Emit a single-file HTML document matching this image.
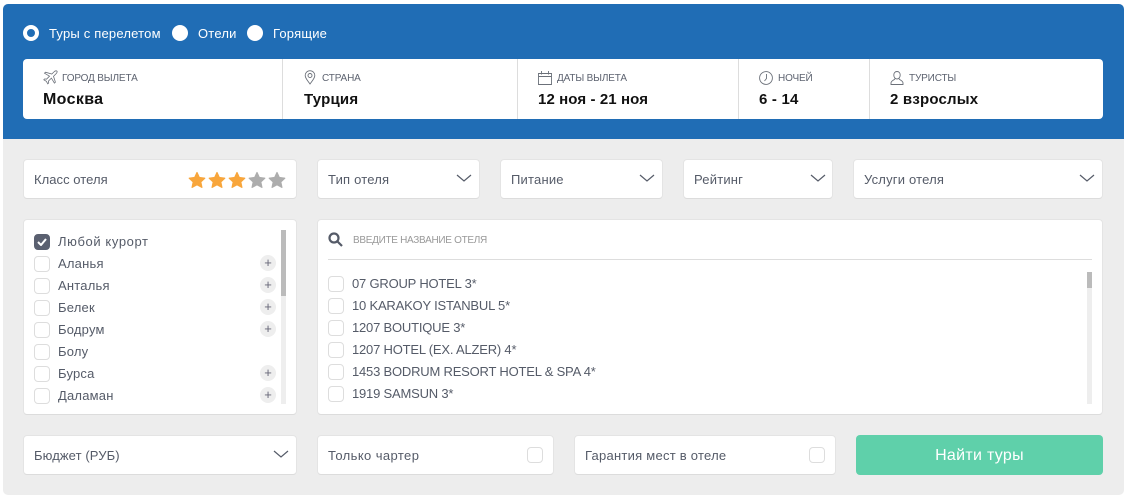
<!DOCTYPE html>
<html lang="ru"><head><meta charset="utf-8"><style>
html,body{margin:0;padding:0;background:#fff}
body{width:1127px;height:500px;position:relative;overflow:hidden;font-family:"Liberation Sans",sans-serif;color:#555b68}
div,span,svg{position:absolute;box-sizing:border-box}
.t{white-space:nowrap;line-height:20px;font-size:13px;letter-spacing:.2px}
.l{letter-spacing:-.2px}
.box{background:#fff;border:1px solid #e4e4e4;border-bottom-color:#dcdcdc;border-radius:4px}
.cb{width:16px;height:16px;background:#fff;border:1px solid #ddd;border-radius:4px}
.lab{white-space:nowrap;font-size:10px;line-height:14px;top:72px;color:#5d6370;letter-spacing:-.15px}
.val{white-space:nowrap;font-size:15px;font-weight:bold;line-height:20px;top:90px;color:#111;letter-spacing:.2px}
.div{top:59px;width:1px;height:60px;background:#ddd}
.plus{left:260px;width:16px;height:16px;border-radius:50%;background:#eee;color:#667;font-size:13px;line-height:16px;text-align:center}
.tab{white-space:nowrap;color:#fff;font-size:13px;line-height:20px;top:24px;letter-spacing:.2px}
.dot{top:25px;width:16px;height:16px;border-radius:50%;background:#fff}
.st{stroke-width:1.2;stroke-linejoin:round}
</style></head><body>
<div style="left:3px;top:4px;width:1121px;height:491px;background:#ededed;border-radius:5px"></div>
<div style="left:3px;top:4px;width:1121px;height:135px;background:#206db5;border-radius:5px 5px 0 0"></div>

<div class="dot" style="left:23px;border:4px solid #fff;background:#206db5"></div>
<div class="tab" style="left:49px">Туры с перелетом</div>
<div class="dot" style="left:172px"></div>
<div class="tab" style="left:198px">Отели</div>
<div class="dot" style="left:247px"></div>
<div class="tab" style="left:273px">Горящие</div>

<div style="left:23px;top:59px;width:1080px;height:60px;background:#fff;border-radius:4px"></div>
<div class="div" style="left:282px"></div><div class="div" style="left:517px"></div><div class="div" style="left:738px"></div><div class="div" style="left:869px"></div>

<svg style="left:43px;top:70px" width="15" height="15" viewBox="0 0 15 15" fill="none" stroke="#6b7079" stroke-width=".8"><path d="M14 1.200c-.8-.7-2-.3-3 .7L8.800 4 2.500 2.200 1.500 3.200l5 3-3 3-1.800-.3-.9.900 2.500 1.500 1.500 2.500.9-.9-.3-1.800 3-3 3 5 1-1L10.500 6.300 12.800 4c1-1 1.800-2 1.200-2.800z"/></svg>
<div class="lab" style="left:62px">ГОРОД ВЫЛЕТА</div>
<div class="val" style="left:43px;font-size:16px;letter-spacing:.35px">Москва</div>

<svg style="left:304px;top:70px" width="12" height="15" viewBox="0 0 12 15" fill="none" stroke="#6b7079" stroke-width=".9"><path d="M6 14C3.500 10.500 1.200 8.200 1.200 5.500a4.800 4.800 0 0 1 9.600 0C10.800 8.200 8.500 10.500 6 14z"/><circle cx="6" cy="5.500" r="2"/></svg>
<div class="lab" style="left:322px">СТРАНА</div>
<div class="val" style="left:304px">Турция</div>

<svg style="left:538px;top:71px" width="14" height="14" viewBox="0 0 14 14" fill="none" stroke="#6b7079" stroke-width=".9"><path d="M.5 2.500h13v11H.5zM.5 5.500h13M3.500 0v3.500M10.500 0v3.500"/></svg>
<div class="lab" style="left:557px">ДАТЫ ВЫЛЕТА</div>
<div class="val" style="left:538px;letter-spacing:.1px">12 ноя - 21 ноя</div>

<svg style="left:759px;top:71px" width="14" height="14" viewBox="0 0 14 14" fill="none" stroke="#6b7079" stroke-width=".9"><circle cx="7" cy="7" r="6.400"/><path d="M7.500 3v4.500L5.500 10"/></svg>
<div class="lab" style="left:778px">НОЧЕЙ</div>
<div class="val" style="left:759px">6 - 14</div>

<svg style="left:890px;top:71px" width="14" height="14" viewBox="0 0 14 14" fill="none" stroke="#6b7079" stroke-width=".9"><path d="M7 .5c2 0 3.200 1.500 3.200 3.500S9 8 7 8 3.800 6 3.800 4 5 .5 7 .5zM5 7.500c0 1.500-4 2-4 4.500v1.500h12V12c0-2.500-4-3-4-4.500"/></svg>
<div class="lab" style="left:909px">ТУРИСТЫ</div>
<div class="val" style="left:890px">2 взрослых</div>

<div class="box" style="left:23px;top:159px;width:274px;height:40px"></div>
<div class="t" style="left:34px;top:170px;letter-spacing:.05px">Класс отеля</div>
<svg style="left:188px;top:171px" width="99" height="19" viewBox="0 0 99 19">
<path class="st" fill="#f8a63c" stroke="#f8a63c" d="M9 1.500l2.300 5 5.500.7-4 3.800 1.100 5.400L9 13.700l-4.900 2.700 1.100-5.400-4-3.800 5.500-.7z"/>
<path class="st" transform="translate(20)" fill="#f8a63c" stroke="#f8a63c" d="M9 1.500l2.300 5 5.500.7-4 3.800 1.100 5.400L9 13.700l-4.900 2.700 1.100-5.400-4-3.800 5.500-.7z"/>
<path class="st" transform="translate(40)" fill="#f8a63c" stroke="#f8a63c" d="M9 1.500l2.300 5 5.500.7-4 3.800 1.100 5.400L9 13.700l-4.900 2.700 1.100-5.400-4-3.800 5.500-.7z"/>
<path class="st" transform="translate(60)" fill="#adadad" stroke="#adadad" d="M9 1.500l2.300 5 5.500.7-4 3.800 1.100 5.400L9 13.700l-4.900 2.700 1.100-5.400-4-3.800 5.500-.7z"/>
<path class="st" transform="translate(80)" fill="#adadad" stroke="#adadad" d="M9 1.500l2.300 5 5.500.7-4 3.800 1.100 5.400L9 13.700l-4.900 2.700 1.100-5.400-4-3.800 5.500-.7z"/>
</svg>

<div class="box" style="left:317px;top:159px;width:163px;height:40px"></div>
<div class="t" style="left:328px;top:170px">Тип отеля</div>
<svg style="left:456px;top:174px" width="16" height="9" fill="none" stroke="#555b68" stroke-width="1.200"><path d="M1 1l7 6 7-6"/></svg>
<div class="box" style="left:500px;top:159px;width:163px;height:40px"></div>
<div class="t" style="left:511px;top:170px">Питание</div>
<svg style="left:639px;top:174px" width="16" height="9" fill="none" stroke="#555b68" stroke-width="1.200"><path d="M1 1l7 6 7-6"/></svg>
<div class="box" style="left:683px;top:159px;width:150px;height:40px"></div>
<div class="t" style="left:694px;top:170px">Рейтинг</div>
<svg style="left:810px;top:174px" width="16" height="9" fill="none" stroke="#555b68" stroke-width="1.200"><path d="M1 1l7 6 7-6"/></svg>
<div class="box" style="left:853px;top:159px;width:250px;height:40px"></div>
<div class="t" style="left:864px;top:170px">Услуги отеля</div>
<svg style="left:1079px;top:174px" width="16" height="9" fill="none" stroke="#555b68" stroke-width="1.200"><path d="M1 1l7 6 7-6"/></svg>

<div class="box" style="left:23px;top:219px;width:274px;height:196px"></div>
<div style="left:281px;top:230px;width:5px;height:174px;background:#eee"></div>
<div style="left:281px;top:230px;width:5px;height:66px;background:#bbb"></div>
<div class="cb" style="left:34px;top:234px;background:#5a6070;border-color:#5a6070"></div>
<svg style="left:37px;top:238px" width="10" height="8" fill="none" stroke="#fff" stroke-width="2"><path d="M1 4l3 3 5-6"/></svg>
<div class="t" style="left:58px;top:232px;letter-spacing:.6px">Любой курорт</div>
<div class="cb" style="left:34px;top:256px"></div><div class="t" style="left:58px;top:254px">Аланья</div><div class="plus" style="top:255px">+</div>
<div class="cb" style="left:34px;top:278px"></div><div class="t" style="left:58px;top:276px">Анталья</div><div class="plus" style="top:277px">+</div>
<div class="cb" style="left:34px;top:300px"></div><div class="t" style="left:58px;top:298px">Белек</div><div class="plus" style="top:299px">+</div>
<div class="cb" style="left:34px;top:322px"></div><div class="t" style="left:58px;top:320px">Бодрум</div><div class="plus" style="top:321px">+</div>
<div class="cb" style="left:34px;top:344px"></div><div class="t" style="left:58px;top:342px">Болу</div>
<div class="cb" style="left:34px;top:366px"></div><div class="t" style="left:58px;top:364px">Бурса</div><div class="plus" style="top:365px">+</div>
<div class="cb" style="left:34px;top:388px"></div><div class="t" style="left:58px;top:386px">Даламан</div><div class="plus" style="top:387px">+</div>

<div class="box" style="left:317px;top:219px;width:786px;height:196px"></div>
<svg style="left:328px;top:232px" width="15" height="15" fill="none" stroke="#555b68" stroke-width="2.200"><circle cx="6" cy="6" r="4.500"/><path d="M9.500 9.500l4.500 4.500"/></svg>
<div style="left:353px;top:234px;white-space:nowrap;font-size:10px;line-height:14px;color:#999;letter-spacing:-.3px">ВВЕДИТЕ НАЗВАНИЕ ОТЕЛЯ</div>
<div style="left:328px;top:259px;width:764px;height:1px;background:#ddd"></div>
<div style="left:1087px;top:272px;width:5px;height:132px;background:#eee"></div>
<div style="left:1087px;top:272px;width:5px;height:16px;background:#bbb"></div>
<div class="cb" style="left:328px;top:276px"></div><div class="t l" style="left:352px;top:274px">07 GROUP HOTEL 3*</div>
<div class="cb" style="left:328px;top:298px"></div><div class="t l" style="left:352px;top:296px">10 KARAKOY ISTANBUL 5*</div>
<div class="cb" style="left:328px;top:320px"></div><div class="t l" style="left:352px;top:318px">1207 BOUTIQUE 3*</div>
<div class="cb" style="left:328px;top:342px"></div><div class="t l" style="left:352px;top:340px">1207 HOTEL (EX. ALZER) 4*</div>
<div class="cb" style="left:328px;top:364px"></div><div class="t l" style="left:352px;top:362px">1453 BODRUM RESORT HOTEL &amp; SPA 4*</div>
<div class="cb" style="left:328px;top:386px"></div><div class="t l" style="left:352px;top:384px">1919 SAMSUN 3*</div>

<div class="box" style="left:23px;top:435px;width:274px;height:40px"></div>
<div class="t" style="left:34px;top:446px;letter-spacing:.1px">Бюджет (РУБ)</div>
<svg style="left:273px;top:450px" width="16" height="9" fill="none" stroke="#555b68" stroke-width="1.200"><path d="M1 1l7 6 7-6"/></svg>
<div class="box" style="left:317px;top:435px;width:237px;height:40px"></div>
<div class="t" style="left:328px;top:446px;letter-spacing:.4px">Только чартер</div>
<div class="cb" style="left:527px;top:447px"></div>
<div class="box" style="left:574px;top:435px;width:262px;height:40px"></div>
<div class="t" style="left:585px;top:446px;letter-spacing:.25px">Гарантия мест в отеле</div>
<div class="cb" style="left:809px;top:447px"></div>
<div style="left:856px;top:435px;width:247px;height:40px;background:#5fd0aa;border-radius:4px;color:#fff;font-size:16px;line-height:42px;text-align:center;letter-spacing:.3px">Найти туры</div>
</body></html>
